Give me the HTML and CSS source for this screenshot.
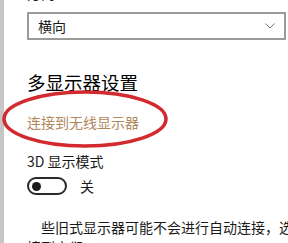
FILE: index.html
```html
<!DOCTYPE html>
<html lang="zh-CN">
<head>
<meta charset="utf-8">
<link rel="stylesheet" href="styles.css">
</head>
<body>
<div class="page">
  <div class="strip"></div>
  <div class="content">
    <div class="label">方向</div>
    <div class="select">
      <span>横向</span>
      <svg class="chev" width="10" height="6" viewBox="0 0 10 6"><path d="M0.5 0.5 L5 5 L9.5 0.5" fill="none" stroke="#777" stroke-width="1"/></svg>
    </div>
    <h2 class="heading">多显示器设置</h2>
    <div class="link">连接到无线显示器</div>
    <div class="text mode">3D 显示模式</div>
    <div class="toggle-row">
      <div class="toggle"><div class="knob"></div></div>
      <span class="text">关</span>
    </div>
    <p class="para">些旧式显示器可能不会进行自动连接，选择“连接”以尝试连<br>接到它们。</p>
  </div>
  <svg class="circle" width="180" height="70" viewBox="0 0 180 70">
    <ellipse cx="85" cy="30" rx="81" ry="27" fill="none" stroke="#d22a2e" stroke-width="3.5"/>
  </svg>
</div>
</body>
</html>
```
FILE: styles.css
```css
html, body {
  margin: 0;
  padding: 0;
  overflow: hidden;
  background: #fff;
}
body {
  font-family: "Noto Sans CJK SC", "Noto Sans", sans-serif;
  color: #1a1a1a;
}
.page {
  position: relative;
  display: flex;
  width: 288px;
  height: 243px;
  overflow: hidden;
}
.strip {
  width: 4px;
  flex: none;
  background: #c6c6c6;
}
.content {
  flex: none;
  width: 600px;
  padding-left: 23px;
}
.label {
  font-size: 14px;
  line-height: 16px;
  margin-top: -15px;
}
.select {
  box-sizing: border-box;
  width: 259px;
  height: 28px;
  margin-top: 11px;
  border: 2px solid #9a9a9a;
  display: flex;
  align-items: center;
  justify-content: space-between;
  padding: 0 9px 0 9px;
  font-size: 14px;
}
.chev { display: block; }
.heading {
  margin: 30px 0 0 0;
  font-size: 18.5px;
  font-weight: normal;
  line-height: 24px;
  color: #000;
}
.link {
  margin-top: 18px;
  font-size: 14px;
  line-height: 20px;
  color: #b0875c;
}
.text {
  font-size: 14px;
  line-height: 20px;
}
.mode {
  margin-top: 19px;
}
.toggle-row {
  display: flex;
  align-items: center;
  gap: 13px;
  margin-top: 5px;
}
.toggle {
  box-sizing: border-box;
  width: 40px;
  height: 18px;
  border: 2px solid #2a2a2a;
  border-radius: 9px;
  display: flex;
  align-items: center;
  padding-left: 3px;
}
.knob {
  width: 9px;
  height: 9px;
  border-radius: 50%;
  background: #1a1a1a;
}
.para {
  margin: 21px 0 0 0;
  font-size: 14px;
  line-height: 20px;
  text-indent: 14px;
  white-space: nowrap;
}
.circle {
  position: absolute;
  left: 0;
  top: 89px;
}
```
